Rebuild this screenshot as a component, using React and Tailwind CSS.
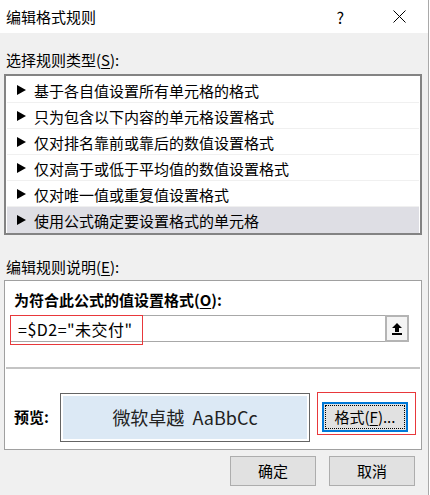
import React from "react";

const font = { fontFamily: '"Noto Sans CJK SC", "Noto Sans", sans-serif' };

const rules = [
  "基于各自值设置所有单元格的格式",
  "只为包含以下内容的单元格设置格式",
  "仅对排名靠前或靠后的数值设置格式",
  "仅对高于或低于平均值的数值设置格式",
  "仅对唯一值或重复值设置格式",
  "使用公式确定要设置格式的单元格",
];

function Arrow() {
  return (
    <svg width="9" height="10" viewBox="0 0 9 10" className="shrink-0">
      <path d="M0 0 L9 5 L0 10 Z" fill="#000" />
    </svg>
  );
}

function UploadIcon() {
  return (
    <svg width="12" height="14" viewBox="0 0 12 14">
      <path d="M6 1 L11 6 L8 6 L8 10 L4 10 L4 6 L1 6 Z" fill="#000" />
      <rect x="1" y="11" width="10" height="2" fill="#000" />
    </svg>
  );
}

export default function App() {
  return (
    <div className="w-[430px] h-[495px] flex bg-white text-black" style={font}>
      <div className="w-[428px] h-full flex flex-col bg-[#f0f0f0]">
        {/* title bar */}
        <div className="h-[33px] bg-white flex items-center pl-[6px] shrink-0">
          <span className="text-[15px] leading-none">编辑格式规则</span>
          <span className="ml-auto text-[16px] leading-none mr-[49px]">?</span>
          <svg width="13" height="13" viewBox="0 0 13 13" className="mr-[22px]">
            <path d="M0.5 0.5 L12.5 12.5 M12.5 0.5 L0.5 12.5" stroke="#000" strokeWidth="1" />
          </svg>
        </div>

        <div className="pt-[17px] pl-[6px] h-[20px] box-content text-[15px] leading-[20px]">
          选择规则类型(<span className="underline underline-offset-2">S</span>):
        </div>

        {/* rule list */}
        <div className="mt-[4px] ml-[4px] w-[418px] h-[161px] border-2 border-[#838383] bg-white px-[1px] pt-[1px]">
          {rules.map((r, i) => (
            <div
              key={i}
              className={`h-[26px] flex items-center gap-[8px] pl-[10px] text-[15px] ${
                i === 5 ? "bg-[#dedee4]" : "border-b border-[#f0f0f0]"
              }`}
            >
              <Arrow />
              <span className="pt-[3px]">{r}</span>
            </div>
          ))}
        </div>

        <div className="mt-[22px] pl-[6px] h-[20px] text-[15px] leading-[20px]">
          编辑规则说明(<span className="underline underline-offset-2">E</span>):
        </div>

        {/* description panel */}
        <div className="mt-[3px] ml-[4px] w-[418px] h-[170px] border border-[#a0a0a0] bg-white flex flex-col">
          <div className="mt-[9px] ml-[9px] h-[20px] text-[15px] font-bold leading-[20px]">
            为符合此公式的值设置格式(<span className="underline underline-offset-2">O</span>):
          </div>

          <div className="relative mt-[5px] ml-[5px] w-[399px] h-[27px] flex">
            <div className="flex-1 border border-r-0 border-[#a8a8a8] flex items-center pl-[7px] text-[16px] tracking-[0.5px]">
              =$D2="未交付"
            </div>
            <div className="w-[24px] h-[27px] border-2 border-[#b4b4b4] bg-[#f4f4f4] flex items-center justify-center">
              <UploadIcon />
            </div>
            <div className="absolute left-0 top-0 w-[133px] h-[30px] border border-[#e8383b]" />
          </div>

          <div className="mt-[25px] ml-[1px] mr-[1px] h-[2px] bg-[#c4c4c4]" />

          <div className="mt-[24px] flex items-start">
            <div className="ml-[9px] w-[46px] h-[49px] flex items-center text-[15px] font-bold">预览:</div>
            <div className="w-[250px] h-[49px] border border-[#646464] p-[2px]">
              <div className="w-full h-full bg-[#dce9f5] flex items-center justify-center text-[18px] text-[#222]">
                微软卓越&nbsp;&nbsp;AaBbCc
              </div>
            </div>
            <div className="ml-[7px] -mt-[1px] border border-[#e8383b] pl-[4px] pr-[7px] pt-[9px] pb-[2px]">
              <div className="w-[86px] h-[30px] border-2 border-[#0078d7] bg-[#e1e1e1] p-[1px]">
                <div className="w-full h-full border border-dotted border-black flex items-center justify-center text-[15px]">
                  格式(<span className="underline underline-offset-2">F</span>)...
                </div>
              </div>
            </div>
          </div>
        </div>

        {/* bottom buttons */}
        <div className="mt-[6px] flex pl-[230px] gap-[13px]">
          <button className="w-[86px] h-[30px] border border-[#adadad] bg-[#e1e1e1] text-[15px]">确定</button>
          <button className="w-[86px] h-[30px] border border-[#adadad] bg-[#e1e1e1] text-[15px]">取消</button>
        </div>
      </div>
      <div className="w-px h-full bg-[#a9a9a9]" />
      <div className="w-px h-full bg-white" />
    </div>
  );
}
